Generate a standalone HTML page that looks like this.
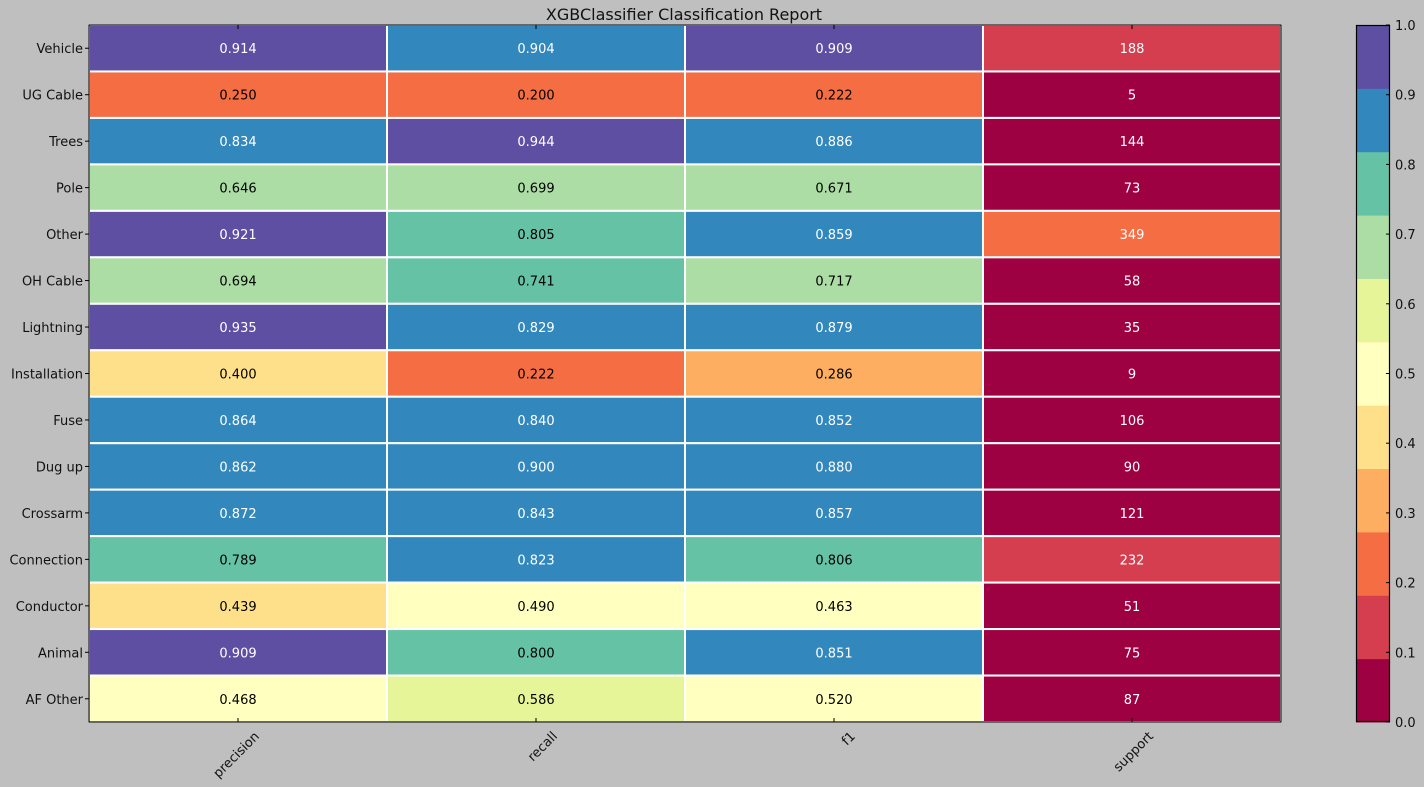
<!DOCTYPE html><html><head><style>body{margin:0;background:#bfbfbf}svg{display:block}text{font-family:"DejaVu Sans","Liberation Sans",sans-serif;font-size:13px}</style></head><body>
<svg width="1424" height="787" xmlns="http://www.w3.org/2000/svg" id="s">
<rect width="1424" height="787" fill="#bfbfbf"/>
<text x="684" y="20" text-anchor="middle" style="font-size:16px" fill="#111">XGBClassifier Classification Report</text>
<g id="cells"></g>
<rect x="89" y="25" width="1192" height="697" fill="none" stroke="#000" stroke-width="1.2"/>
<g id="cb"></g>
<rect x="1356.5" y="25.5" width="33" height="696" fill="none" stroke="#000" stroke-width="1.2"/>
</svg>
<script>
var C={P:"#5e4fa2",B:"#3288bd",T:"#66c2a5",G:"#abdda4",Y:"#e6f598",L:"#ffffbf",O:"#fee08b",A:"#fdae61",R:"#f46d43",D:"#d53e4f",M:"#9e0142"};
var rows=[["Vehicle","PBPD",["0.914","0.904","0.909","188"]],["UG Cable","RRRM",["0.250","0.200","0.222","5"]],["Trees","BPBM",["0.834","0.944","0.886","144"]],["Pole","GGGM",["0.646","0.699","0.671","73"]],["Other","PTBR",["0.921","0.805","0.859","349"]],["OH Cable","GTGM",["0.694","0.741","0.717","58"]],["Lightning","PBBM",["0.935","0.829","0.879","35"]],["Installation","ORAM",["0.400","0.222","0.286","9"]],["Fuse","BBBM",["0.864","0.840","0.852","106"]],["Dug up","BBBM",["0.862","0.900","0.880","90"]],["Crossarm","BBBM",["0.872","0.843","0.857","121"]],["Connection","TBTD",["0.789","0.823","0.806","232"]],["Conductor","OLLM",["0.439","0.490","0.463","51"]],["Animal","PTBM",["0.909","0.800","0.851","75"]],["AF Other","LYLM",["0.468","0.586","0.520","87"]]];
var h="",rh=697/15,cw=298;
rows.forEach(function(r,i){var y=25+i*rh;
for(var j=0;j<4;j++){var x=89+j*cw,k=r[1][j];
h+='<rect x="'+x+'" y="'+y+'" width="'+cw+'" height="'+rh+'" fill="'+C[k]+'" stroke="#fff" stroke-width="2"/>';
var wt=(j==3||k=="P"||k=="B"||k=="M"||k=="D");
h+='<text x="'+(x+cw/2)+'" y="'+(y+rh/2+5)+'" text-anchor="middle" fill="'+(wt?"#fff":"#000")+'">'+r[2][j]+'</text>';}
h+='<line x1="85" x2="89" y1="'+(y+rh/2)+'" y2="'+(y+rh/2)+'" stroke="#000"/>';
h+='<text x="83" y="'+(y+rh/2+5)+'" text-anchor="end" fill="#111">'+r[0]+'</text>';});
["precision","recall","f1","support"].forEach(function(n,j){var x=89+j*cw+cw/2;
h+='<line x1="'+x+'" x2="'+x+'" y1="722" y2="718" stroke="#000"/><line x1="'+x+'" x2="'+x+'" y1="25" y2="29" stroke="#000"/>';
h+='<text transform="translate('+(x+22)+',737) rotate(-45)" text-anchor="end" fill="#111">'+n+'</text>';});
document.getElementById("cells").innerHTML=h;
var o="",ks="MDRAOLYGTBP",sh=697/11;
for(var i=0;i<11;i++){o+='<rect x="1356" y="'+(722-(i+1)*sh)+'" width="34" height="'+(sh+0.5)+'" fill="'+C[ks[i]]+'"/>';}
for(var i=0;i<=10;i++){var y=722-i*69.7;o+='<text x="1395" y="'+(y+5)+'" fill="#111">'+(i/10).toFixed(1)+'</text><line x1="1386" x2="1390" y1="'+y+'" y2="'+y+'" stroke="#000"/>';}
document.getElementById("cb").innerHTML=o;
</script></body></html>
